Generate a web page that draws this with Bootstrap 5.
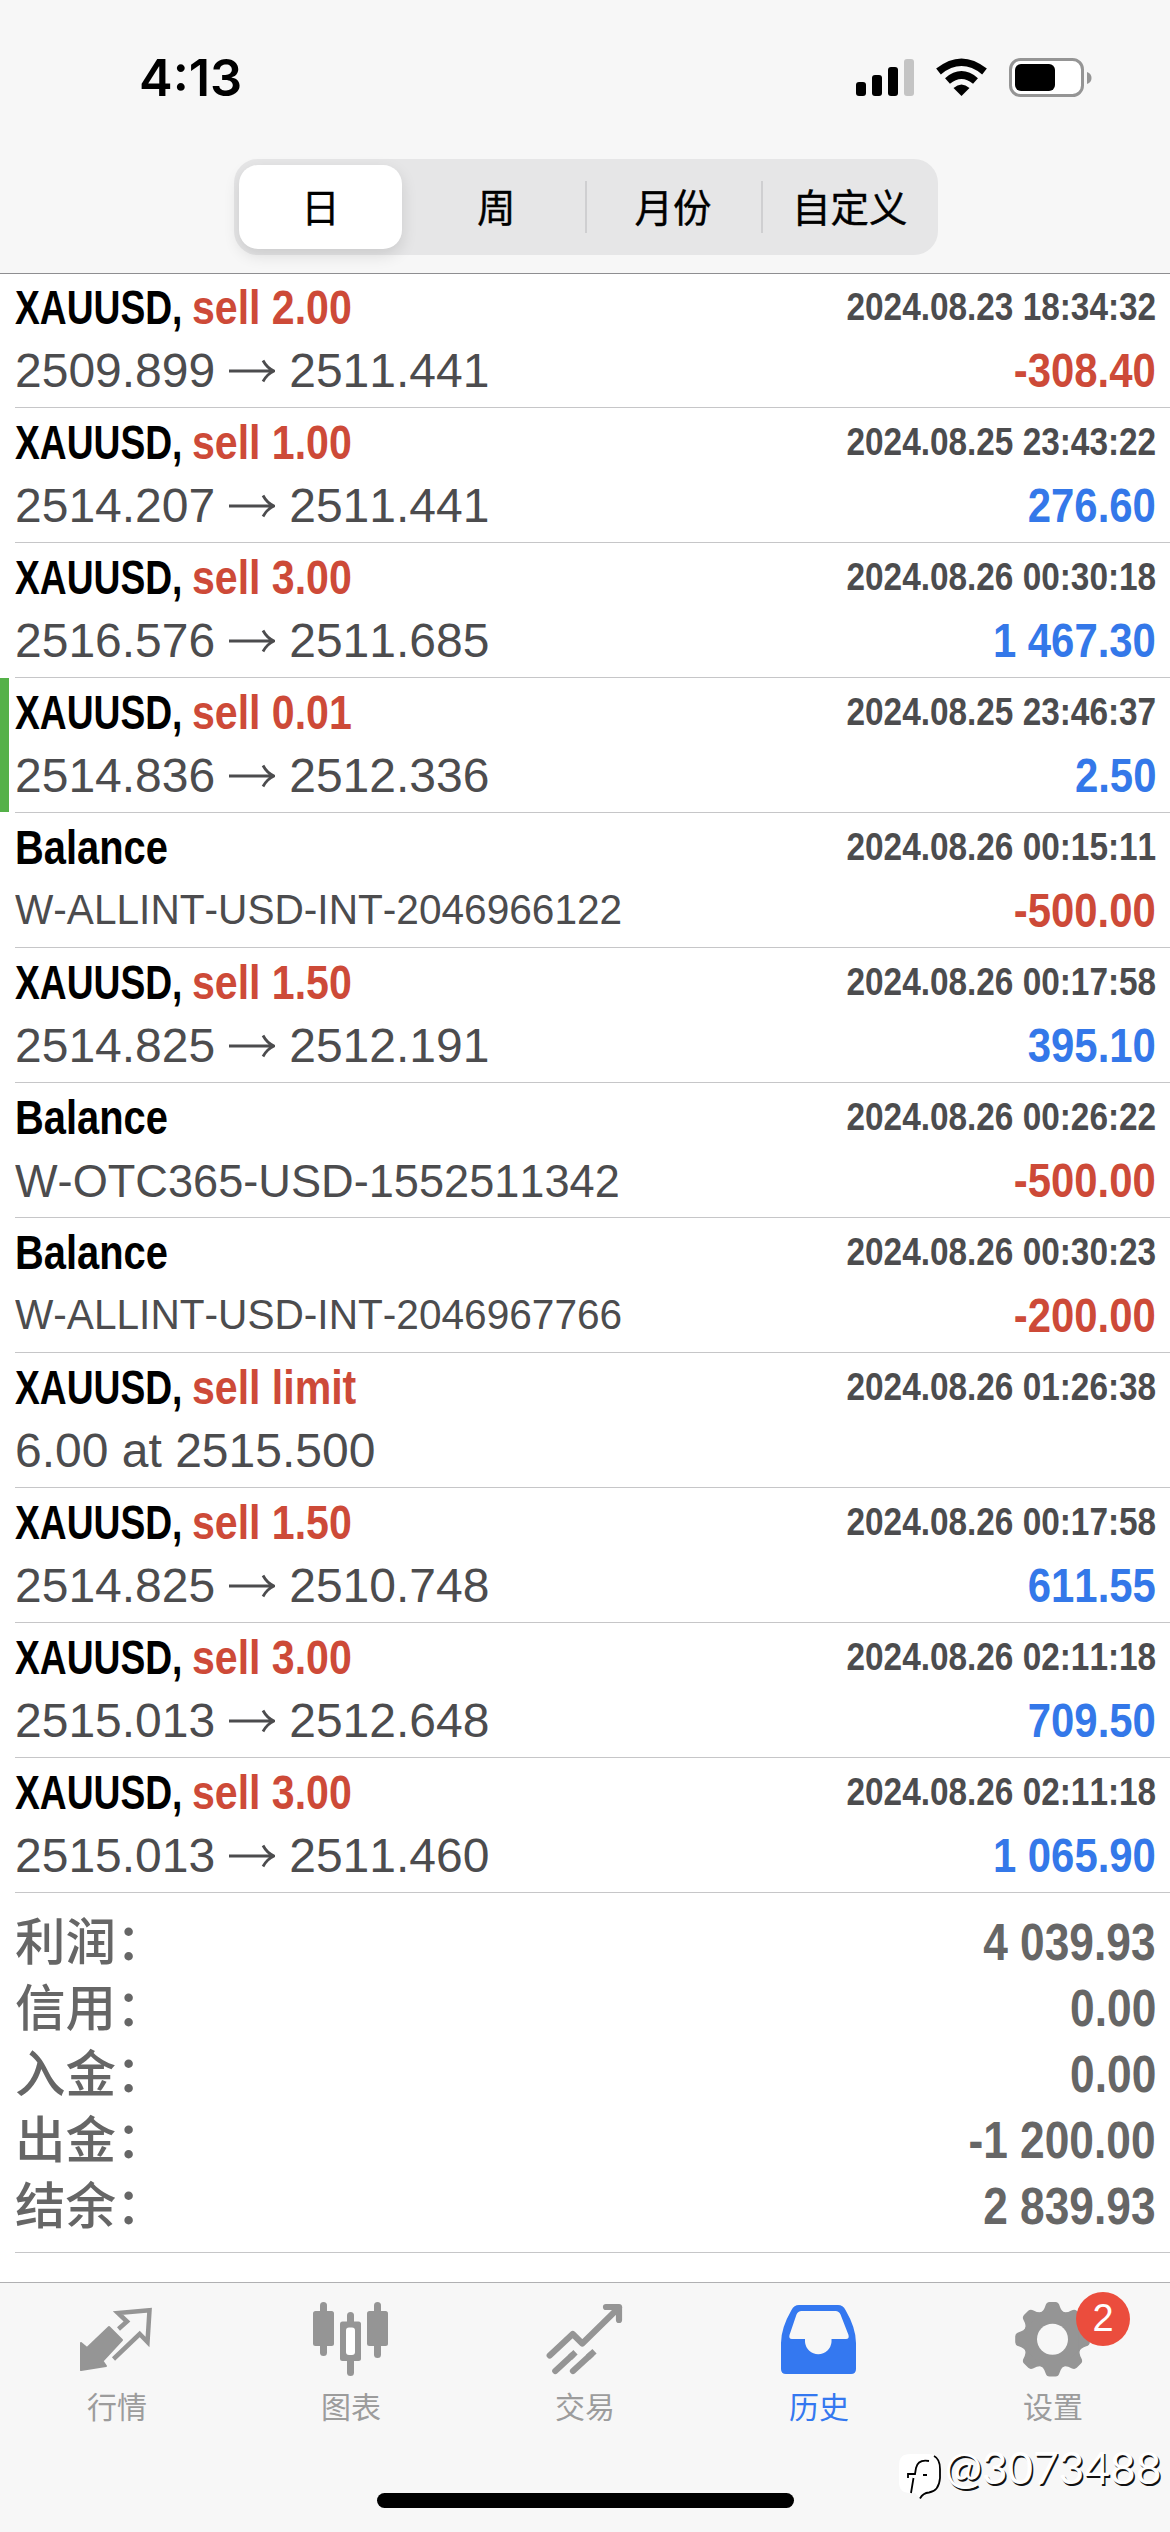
<!DOCTYPE html>
<html lang="zh-CN">
<head>
<meta charset="utf-8">
<meta name="viewport" content="width=device-width, initial-scale=1">
<title>历史</title>
<link href="https://cdn.jsdelivr.net/npm/bootstrap@5.3.0/dist/css/bootstrap.min.css" rel="stylesheet">
<style>
  body { width: 1170px; height: 2532px; overflow: hidden; background: #fff; font-family: "Liberation Sans", "Noto Sans CJK SC", sans-serif; font-kerning: none; }
  .cjk { font-family: "Noto Sans CJK SC", sans-serif; }

  .topbar { height: 273px; background: #f7f7f7; box-shadow: 0 1px 0 #8e8e91; z-index: 1; }
  .statusbar { height: 159px; padding: 50px 70px 0 139px; }
  .clock { font: 600 50.5px/56px Inter, sans-serif; letter-spacing: 0; color: #000; }
  .seg { width: 704px; height: 96px; margin-left: 234px; padding: 6px 0 6px 5px; border-radius: 24px; background: #e6e6e7; }
  .seg button { border: 0; background: none; flex: 1 1 0; padding: 0; font-size: 38.5px; line-height: 80px; padding-bottom: 4px; font-weight: 400; color: #000; -webkit-text-stroke: .4px #000; }
  .seg .on { flex: 0 0 163px; background: #fff; border-radius: 19px; box-shadow: 0 6px 16px rgba(0,0,0,.12); }
  .seg .gap-first { flex: 0 0 6px; }
  .seg .bar-left { background: linear-gradient(#cfcfd1, #cfcfd1) left center / 2px 52px no-repeat; }

  .deal { height: 135px; padding-right: 14px; margin-left: 15px; border-bottom: 1px solid #c6c6c8; }
  .deal.marked::before { content: ""; position: absolute; left: -15px; top: 0; width: 9px; height: 134px; background: #54b148; }
  .l1 { height: 69px; line-height: 69px; font-size: 48px; font-weight: 700; }
  .l2 { height: 57px; line-height: 57px; font-size: 48px; color: #4c4c4e; }
  .sq { display: inline-block; white-space: pre; transform-origin: 0 50%; }
  .sq-r { display: inline-block; white-space: pre; transform-origin: 100% 50%; }
  .sym { width: 177px; transform: scaleX(.775); color: #000; }
  .bal { transform: scaleX(.83); color: #000; }
  .side { transform: scaleX(.855); color: #cd4a38; }
  .stamp { font-size: 39px; line-height: 67px; transform: scaleX(.855); color: #4c4c4e; }
  .amt { font-weight: 700; transform: scaleX(.872); }
  .neg { color: #cd4a38; }
  .pos { color: #3478e9; }
  .arrow { width: 74px; padding-right: 1px; }
  .acc { font-size: 42px; line-height: 56px; transform: scaleX(.967); }
  .acc-lg { font-size: 46.5px; line-height: 58px; transform: scaleX(.971); }

  .summary { height: 360px; padding: 17px 14px 0 0; margin-left: 15px; border-bottom: 1px solid #c6c6c8; color: #666; }
  .sumrow { height: 66px; line-height: 66px; font-weight: 700; }
  .sumlabel { font-size: 50.5px; font-weight: 500; line-height: 65px; }
  .sumval { font-size: 51px; transform: scaleX(.868); }

  .tabbar { height: 250px; margin-top: 29px; background: #f7f7f7; border-top: 1px solid #b0b0b2; color: #959595; }
  .tabbar svg { display: block; margin: 17px auto 0; overflow: visible; }
  .tablabel { font-size: 30px; line-height: 30px; margin-top: 12px; color: #9c9c9c; }
  .tab-on, .tab-on .tablabel { color: #3478f0; }
  .count { position: absolute; left: 140px; top: 9px; width: 54px; height: 54px; border-radius: 50%; background: #eb4d3d; color: #fff; font: 400 38px/52px "Liberation Sans", sans-serif; }
  .home { position: absolute; left: 377px; bottom: 24px; width: 417px; height: 15px; border-radius: 8px; background: #000; }
  .wm { position: absolute; right: 9px; bottom: 35px; height: 60px; }
  .wm span { font: 400 44.5px/60px Lato, sans-serif; color: #fff; text-shadow: 1.5px 1.5px 0 #111; letter-spacing: -.2px; }
</style>
<script src="https://cdn.jsdelivr.net/npm/bootstrap@5.3.0/dist/js/bootstrap.bundle.min.js"></script>
</head>
<body class="d-flex flex-column position-relative">

<header class="topbar flex-shrink-0 position-relative">
  <div class="statusbar d-flex justify-content-between align-items-start">
    <div class="clock">4:13</div>
    <svg width="250" height="56" viewBox="0 0 250 56" aria-hidden="true">
      <g><rect x="6" y="32" width="10" height="14" rx="3"/><rect x="22" y="25" width="10" height="21" rx="3"/><rect x="38" y="17" width="10" height="29" rx="3"/><rect x="54" y="9" width="10" height="37" rx="3" fill="#c4c4c4"/></g>
      <path d="M111.500 46L103.500 38Q111.500 31 119.500 38Z"/>
      <g fill="none" stroke="#000" stroke-width="7.500"><path d="M88.500 21.500Q111.500 3 134.500 21.500"/><path d="M97.500 31Q111.500 19 125.500 31"/></g>
      <rect x="160.500" y="9.500" width="72" height="36" rx="10" fill="#fff" stroke="#959595" stroke-width="3"/>
      <rect x="165" y="14" width="40" height="27" rx="6"/>
      <path d="M237 22Q241.500 23.500 241.500 28T237 34Z" fill="#959595"/>
    </svg>
  </div>
  <div class="seg d-flex cjk">
    <button class="on" type="button">日</button><span class="gap-first"></span>
    <button type="button">周</button>
    <button class="bar-left" type="button">月份</button>
    <button class="bar-left" type="button">自定义</button>
  </div>
</header>

<main id="deals" class="flex-shrink-0"></main>

<section class="summary flex-shrink-0">
  <div class="sumrow d-flex justify-content-between"><span class="sumlabel">利润：</span><span class="sq-r sumval">4 039.93</span></div>
  <div class="sumrow d-flex justify-content-between"><span class="sumlabel">信用：</span><span class="sq-r sumval">0.00</span></div>
  <div class="sumrow d-flex justify-content-between"><span class="sumlabel">入金：</span><span class="sq-r sumval">0.00</span></div>
  <div class="sumrow d-flex justify-content-between"><span class="sumlabel">出金：</span><span class="sq-r sumval">-1 200.00</span></div>
  <div class="sumrow d-flex justify-content-between"><span class="sumlabel">结余：</span><span class="sq-r sumval">2 839.93</span></div>
</section>

<nav class="tabbar flex-shrink-0 position-relative">
  <div class="row g-0 text-center cjk">
    <div class="col">
      <svg width="78" height="78" viewBox="0 0 78 78"><path fill="currentColor" stroke="currentColor" stroke-width="2" stroke-linejoin="round" d="M3 43L9 48L31 27L44 40L24.500 61L28 66L3 70Z"/><path fill="none" stroke="currentColor" stroke-width="4.500" d="M40.500 29L49 21.500L40 13L71.500 10.300L69.500 42L61.700 34L35.500 59"/></svg>
      <div class="tablabel">行情</div>
    </div>
    <div class="col">
      <svg width="78" height="78" viewBox="0 0 78 78" fill="currentColor"><rect x="1" y="11" width="21" height="35" rx="2.500"/><rect x="8" y="2" width="7" height="54" rx="3.500"/><rect x="55" y="11" width="21" height="35" rx="2.500"/><rect x="62" y="2" width="7" height="56" rx="3.500"/><rect x="28" y="21.500" width="21" height="39.500" rx="2.500"/><rect x="35" y="12" width="7" height="64" rx="3.500"/><rect x="34" y="27.500" width="9" height="27.500" rx="3" fill="#fff"/></svg>
      <div class="tablabel">图表</div>
    </div>
    <div class="col">
      <svg width="78" height="78" viewBox="0 0 78 78" fill="none" stroke="currentColor" stroke-width="6.200" stroke-linecap="round" stroke-linejoin="round"><path d="M3.700 55.500L26.700 34L36.300 43.500L73 7.500M60 7H73V20"/><path d="M9.300 71L26 55.500M27 71L45 54.500"/><path stroke-linecap="butt" d="M24 57.500L29.500 52.300M42 57.300L48.500 51.300"/></svg>
      <div class="tablabel">交易</div>
    </div>
    <div class="col tab-on">
      <svg width="78" height="78" viewBox="0 0 78 78" fill="currentColor"><path d="M19 5H58Q63 5 65.500 10Q76 28 76 43V69Q76 74 71 74H6Q1 74 1 69V43Q1 28 11.500 10Q14 5 19 5Z"/><path fill="#f7f7f7" d="M21.500 11H55.500Q59 11 60.500 14.500L68.500 35Q69.500 39 66 39H51.500V42A13.300 13.300 0 0 1 25 42V39H12Q8.500 39 9.500 35L16.500 14.500Q18 11 21.500 11Z"/></svg>
      <div class="tablabel">历史</div>
    </div>
    <div class="col position-relative">
      <svg width="78" height="78" viewBox="0 0 78 78" fill="currentColor"><defs><path id="tooth" d="M26 13Q30 11 31.500 5.500Q32.500 2 35.500 2H41.500Q44.500 2 45.500 5.500Q47 11 51 13Z"/></defs><circle cx="38.500" cy="39.300" r="29.500"/><g><use href="#tooth"/><use href="#tooth" transform="rotate(45 38.500 39.300)"/><use href="#tooth" transform="rotate(90 38.500 39.300)"/><use href="#tooth" transform="rotate(135 38.500 39.300)"/><use href="#tooth" transform="rotate(180 38.500 39.300)"/><use href="#tooth" transform="rotate(225 38.500 39.300)"/><use href="#tooth" transform="rotate(270 38.500 39.300)"/><use href="#tooth" transform="rotate(315 38.500 39.300)"/></g><circle cx="38.500" cy="39.300" r="15.500" fill="#f7f7f7"/></svg>
      <div class="count">2</div>
      <div class="tablabel">设置</div>
    </div>
  </div>
  <div class="home"></div>
  <div class="wm d-flex align-items-center">
    <svg width="47" height="50" viewBox="0 0 47 50"><path fill="#fff" d="M12 3H31Q42 3 42 15V28Q42 41 31 42Q26 43 23 48L17 42H12Q1 42 1 31V14Q1 3 12 3Z"/><path fill="none" stroke="#000" stroke-width="1.800" d="M36 5Q42 8 42 18V27Q41 40 31 41.500Q25 42 22 47.500M31 10Q20 8 18 17L17 23H10V27M15.500 27L13 42M25 24H29"/></svg>
    <span>@3073488</span>
  </div>
</nav>

<script>
  // [side, second line, time, result, mark]; a null side is a balance operation
  const deals = [
    ["sell 2.00", "2509.899 > 2511.441", "2024.08.23 18:34:32", "-308.40"],
    ["sell 1.00", "2514.207 > 2511.441", "2024.08.25 23:43:22", "276.60"],
    ["sell 3.00", "2516.576 > 2511.685", "2024.08.26 00:30:18", "1 467.30"],
    ["sell 0.01", "2514.836 > 2512.336", "2024.08.25 23:46:37", "2.50", "marked"],
    [null, "W-ALLINT-USD-INT-2046966122", "2024.08.26 00:15:11", "-500.00"],
    ["sell 1.50", "2514.825 > 2512.191", "2024.08.26 00:17:58", "395.10"],
    [null, "W-OTC365-USD-1552511342", "2024.08.26 00:26:22", "-500.00"],
    [null, "W-ALLINT-USD-INT-2046967766", "2024.08.26 00:30:23", "-200.00"],
    ["sell limit", "6.00 at 2515.500", "2024.08.26 01:26:38", ""],
    ["sell 1.50", "2514.825 > 2510.748", "2024.08.26 00:17:58", "611.55"],
    ["sell 3.00", "2515.013 > 2512.648", "2024.08.26 02:11:18", "709.50"],
    ["sell 3.00", "2515.013 > 2511.460", "2024.08.26 02:11:18", "1 065.90"]
  ];
  const arrow = `<svg width="46" height="24" viewBox="0 0 46 24" fill="none" stroke="currentColor" stroke-width="2.800" role="img" aria-label="→"><path d="M0 12H44M34 1.500Q38 9 45 12Q38 15 34 22.500"/></svg>`;
  document.getElementById("deals").innerHTML = deals.map(([side, info, time, sum, mark]) => {
    const head = side ? `<span class="sq sym">XAUUSD,</span><span class="sq side">${side}</span>` : `<span class="sq bal">Balance</span>`;
    const [from, to] = info.split(" > ");
    const body = to
      ? `<span class="d-flex"><span>${from}</span><span class="arrow d-flex align-items-center justify-content-center">${arrow}</span><span>${to}</span></span>`
      : `<span class="sq ${side ? "" : "acc"} ${!side && info.length < 24 ? "acc-lg" : ""}">${info}</span>`;
    return `<div class="deal position-relative ${mark || ""}">
      <div class="l1 d-flex justify-content-between"><div class="d-flex">${head}</div><span class="sq-r stamp">${time}</span></div>
      <div class="l2 d-flex justify-content-between">${body}<span class="sq-r amt ${sum[0] === "-" ? "neg" : "pos"}">${sum}</span></div>
    </div>`;
  }).join("");
</script>
</body>
</html>
